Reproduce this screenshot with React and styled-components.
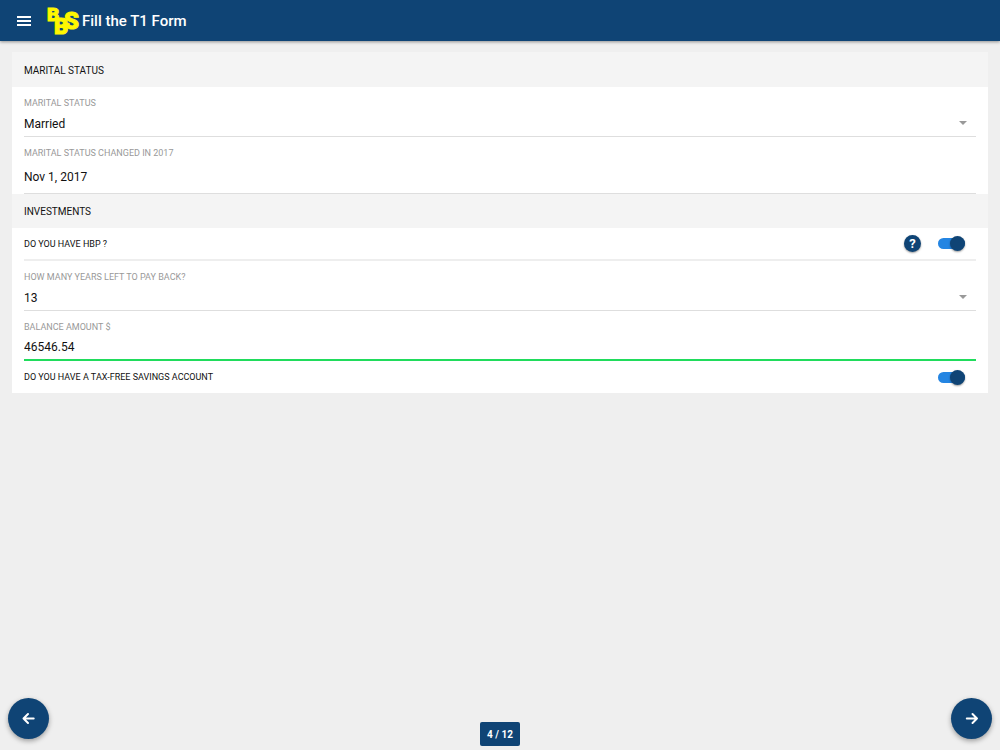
import React, { useState } from 'react';
import styled, { createGlobalStyle } from 'styled-components';

const NAVY = '#0f4475';

const GlobalStyle = createGlobalStyle`
  *, *::before, *::after { box-sizing: border-box; }
  body {
    margin: 0;
    background: #efefef;
    color: #111;
    font-family: Roboto, "Liberation Sans", sans-serif;
    font-size: 12px;
  }
  button, input, select { font: inherit; color: inherit; }
`;

const Header = styled.header`
  position: sticky;
  top: 0;
  z-index: 2;
  display: flex;
  align-items: center;
  height: 41px;
  padding: 0 12px;
  background: ${NAVY};
  color: #fff;
  box-shadow: 0 1px 3px rgba(0, 0, 0, 0.4);
`;

const MenuButton = styled.button`
  display: grid;
  place-items: center;
  width: 24px;
  height: 40px;
  margin-right: 11px;
  padding: 0;
  border: 0;
  background: none;
`;

const Title = styled.h1`
  margin: 0 0 0 4px;
  font-size: 15px;
  font-weight: 500;
  line-height: 20px;
`;

const Logo = styled.svg`
  width: 31px;
  height: 30px;
  overflow: visible;
  fill: #fff700;
  stroke: #fff700;
  stroke-width: 1;
  font-family: Roboto, Arial, sans-serif;
  font-weight: 900;
`;

const Form = styled.form`
  margin: 11px 12px 100px;
  background: #fff;
`;

const SectionTitle = styled.h2`
  margin: 0;
  padding: 2px 12px 0;
  background: #f4f4f4;
  font-size: 10px;
  font-weight: 400;
  line-height: 32px;
`;

const FirstSectionTitle = styled(SectionTitle)`
  padding-top: 3px;
`;

const Field = styled.div`
  display: flex;
  flex-direction: column;
  margin: 0 12px;
  padding-top: 10px;
  border-bottom: ${(p) => (p.$active ? '2px solid #20dc5c' : '1px solid #dedede')};
`;

const Label = styled.label`
  color: #999;
  font-size: 9px;
  line-height: 12px;
`;

const TextInput = styled.input`
  width: 100%;
  height: ${(p) => (p.$tall ? '34px' : '26px')};
  padding: 2px 0 0;
  border: 0;
  outline: 0;
  background: none;
`;

const SelectWrap = styled.div`
  display: flex;
  align-items: center;
  height: 27px;
  padding-right: 9px;
`;

const Select = styled.select`
  flex: 1;
  height: 27px;
  padding: 2px 0 0;
  border: 0;
  outline: 0;
  background: none;
  appearance: none;
`;

const Caret = styled.span`
  border: 4px solid transparent;
  border-top-color: #999;
  border-bottom: 0;
  pointer-events: none;
`;

const ToggleRow = styled.div`
  display: flex;
  align-items: center;
  height: ${(p) => (p.$divided ? '33px' : '32px')};
  margin: 0 12px;
  padding-right: 11px;
  border-bottom: ${(p) => (p.$divided ? '2px solid #eee' : '0')};
`;

const ToggleLabel = styled.label`
  flex: 1;
  font-size: 9px;
  line-height: 12px;
`;

const HelpButton = styled.button`
  display: grid;
  place-items: center;
  width: 17px;
  height: 17px;
  margin-right: 17px;
  padding: 0;
  border: 0;
  border-radius: 50%;
  background: ${NAVY};
  color: #fff;
  font-size: 13px;
  font-weight: 700;
  line-height: 17px;
  box-shadow: 0 1px 2px rgba(0, 0, 0, 0.4);
`;

const Switch = styled.input`
  appearance: none;
  display: flex;
  align-items: center;
  justify-content: ${(p) => (p.checked ? 'flex-end' : 'flex-start')};
  width: 27px;
  height: 11px;
  margin: 0;
  border-radius: 6px;
  background: ${(p) => (p.checked ? '#2485e2' : '#bbb')};
  cursor: pointer;

  &::before {
    content: '';
    flex: none;
    width: 15px;
    height: 15px;
    border-radius: 50%;
    background: ${NAVY};
    box-shadow: 0 1px 2px rgba(0, 0, 0, 0.4);
  }
`;

const RoundButton = styled.button`
  position: fixed;
  bottom: 11px;
  ${(p) => p.$side}: 8px;
  display: grid;
  place-items: center;
  width: 41px;
  height: 41px;
  padding: 0;
  border: 0;
  border-radius: 50%;
  background: ${NAVY};
  color: #fff;
  box-shadow: 0 2px 5px rgba(0, 0, 0, 0.35);
`;

const PageBadge = styled.output`
  position: fixed;
  bottom: 4px;
  left: 50%;
  transform: translateX(-50%);
  min-width: 40px;
  padding: 1px 6px 0;
  border-radius: 2px;
  background: ${NAVY};
  color: #fff;
  font-size: 10px;
  font-weight: 700;
  line-height: 23px;
  text-align: center;
`;

function Arrow({ forward }) {
  return (
    <svg width="14" height="14" viewBox="0 0 14 14" fill="none" stroke="currentColor" strokeWidth="2" strokeLinecap="round" strokeLinejoin="round" aria-hidden="true">
      <path d={forward ? 'M1.8 6.5H12M7.5 2L12 6.5L7.5 11' : 'M11.7 6.5H1.5M6 2L1.5 6.5L6 11'} />
    </svg>
  );
}

function SelectField({ id, label, options, initial }) {
  const [value, setValue] = useState(initial);
  return (
    <Field>
      <Label htmlFor={id}>{label}</Label>
      <SelectWrap>
        <Select id={id} value={value} onChange={(e) => setValue(e.target.value)}>
          {options.map((o) => <option key={o}>{o}</option>)}
        </Select>
        <Caret />
      </SelectWrap>
    </Field>
  );
}

function InputField({ id, label, initial, tall, active }) {
  return (
    <Field $active={active}>
      <Label htmlFor={id}>{label}</Label>
      <TextInput id={id} defaultValue={initial} $tall={tall} />
    </Field>
  );
}

function ToggleField({ id, label, help, divided }) {
  const [on, setOn] = useState(true);
  return (
    <ToggleRow $divided={divided}>
      <ToggleLabel htmlFor={id}>{label}</ToggleLabel>
      {help && <HelpButton type="button">?</HelpButton>}
      <Switch id={id} type="checkbox" checked={on} onChange={(e) => setOn(e.target.checked)} />
    </ToggleRow>
  );
}

export default function App() {
  return (
    <>
      <GlobalStyle />
      <Header>
        <MenuButton type="button" aria-label="Menu">
          <svg width="14" height="10" viewBox="0 0 14 10" fill="#fff" aria-hidden="true">
            <path d="M0 0h14v2H0zM0 4h14v2H0zM0 8h14v2H0z" />
          </svg>
        </MenuButton>
        <Logo viewBox="0 0 31 30" role="img" aria-label="BBS">
          <text x="0" y="15" fontSize="19">B</text>
          <text x="7" y="28" fontSize="22">B</text>
          <text x="17" y="23" fontSize="24">S</text>
        </Logo>
        <Title>Fill the T1 Form</Title>
      </Header>
      <Form onSubmit={(e) => e.preventDefault()}>
        <FirstSectionTitle>MARITAL STATUS</FirstSectionTitle>
        <SelectField id="status" label="MARITAL STATUS" initial="Married" options={['Married', 'Single', 'Divorced', 'Widowed']} />
        <InputField id="changed" label="MARITAL STATUS CHANGED IN 2017" initial="Nov 1, 2017" tall />
        <SectionTitle>INVESTMENTS</SectionTitle>
        <ToggleField id="hbp" label="DO YOU HAVE HBP ?" help divided />
        <SelectField id="years" label="HOW MANY YEARS LEFT TO PAY BACK?" initial="13" options={['11', '12', '13', '14', '15']} />
        <InputField id="balance" label="BALANCE AMOUNT $" initial="46546.54" active />
        <ToggleField id="tfsa" label="DO YOU HAVE A TAX-FREE SAVINGS ACCOUNT" />
      </Form>
      <RoundButton type="button" $side="left" aria-label="Previous page"><Arrow /></RoundButton>
      <PageBadge>4 / 12</PageBadge>
      <RoundButton type="button" $side="right" aria-label="Next page"><Arrow forward /></RoundButton>
    </>
  );
}
